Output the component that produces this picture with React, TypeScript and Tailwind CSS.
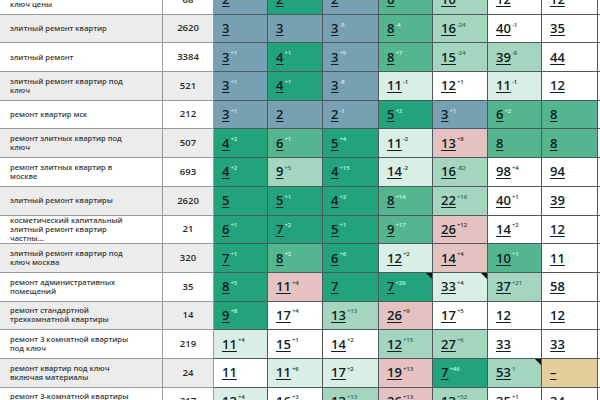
import React from 'react';

type Tone = 'B' | 'G' | 'M' | 'L' | 'V' | 'W' | 'P' | 'T';
type Cell = { v: string; s?: string; tone: Tone; flag?: boolean };

const toneBg: Record<Tone, string> = {
  B: 'bg-[#77a0b3]',
  G: 'bg-[#22a37b]',
  M: 'bg-[#54b68f]',
  L: 'bg-[#a3d5bf]',
  V: 'bg-[#d9eee4]',
  W: 'bg-white',
  P: 'bg-[#e4c2c1]',
  T: 'bg-[#e6cd9c]',
};

const toneSup: Record<Tone, string> = {
  B: 'text-[#d6ecf6]',
  G: 'text-[#c9f3de]',
  M: 'text-[#d6f5e6]',
  L: 'text-[#2f6b55]',
  V: 'text-[#333]',
  W: 'text-[#333]',
  P: 'text-[#333]',
  T: 'text-[#333]',
};

const c = (v: string, tone: Tone, s?: string, flag?: boolean): Cell => ({ v, s, tone, flag });

const rows: { lines: string[]; n: string; cells: Cell[] }[] = [
  {
    lines: ['ремонт квартир под', 'ключ цены'],
    n: '68',
    cells: [c('2', 'B'), c('2', 'G'), c('2', 'B'), c('6', 'M'), c('10', 'L'), c('12', 'W'), c('12', 'W')],
  },
  {
    lines: ['элитный ремонт квартир'],
    n: '2620',
    cells: [c('3', 'B'), c('3', 'B'), c('3', 'B', '-5'), c('8', 'M', '-4'), c('16', 'L', '-24'), c('40', 'W', '-1'), c('35', 'W')],
  },
  {
    lines: ['элитный ремонт'],
    n: '3384',
    cells: [c('3', 'B', '+1'), c('4', 'G', '+1'), c('3', 'B', '+5'), c('8', 'M', '+7'), c('15', 'L', '-24'), c('39', 'L', '-8'), c('44', 'W')],
  },
  {
    lines: ['элитный ремонт квартир под', 'ключ'],
    n: '521',
    cells: [c('3', 'B', '+1'), c('4', 'G', '+1'), c('3', 'B', '-8'), c('11', 'V', '-1'), c('12', 'W', '+1'), c('11', 'V', '-1'), c('12', 'W')],
  },
  {
    lines: ['ремонт квартир мск'],
    n: '212',
    cells: [c('3', 'B', '+1'), c('2', 'B'), c('2', 'B', '-1'), c('5', 'G', '+2'), c('3', 'B', '+1'), c('6', 'M', '+2'), c('8', 'M')],
  },
  {
    lines: ['ремонт элитных квартир под', 'ключ'],
    n: '507',
    cells: [c('4', 'G', '+2'), c('6', 'M', '+1'), c('5', 'G', '+4'), c('11', 'V', '-2'), c('13', 'P', '+8'), c('8', 'M'), c('8', 'M')],
  },
  {
    lines: ['ремонт элитных квартир в', 'москве'],
    n: '693',
    cells: [c('4', 'G', '+2'), c('9', 'L', '+5'), c('4', 'G', '+15'), c('14', 'V', '-2'), c('16', 'L', '-82'), c('98', 'W', '+4'), c('94', 'W')],
  },
  {
    lines: ['элитный ремонт квартиры'],
    n: '2620',
    cells: [c('5', 'G'), c('5', 'G', '+1'), c('4', 'G', '+2'), c('8', 'M', '+14'), c('22', 'L', '+16'), c('40', 'W', '+1'), c('39', 'W')],
  },
  {
    lines: ['косметический капитальный', 'элитный ремонт квартир', 'частны...'],
    n: '21',
    cells: [c('6', 'G', '+1'), c('7', 'G', '+2'), c('5', 'G', '+1'), c('9', 'M', '+17'), c('26', 'P', '+12'), c('14', 'W', '+2'), c('12', 'W')],
  },
  {
    lines: ['элитный ремонт квартир под', 'ключ москва'],
    n: '320',
    cells: [c('7', 'G', '+1'), c('8', 'M', '+2'), c('6', 'G', '+6'), c('12', 'V', '+2'), c('14', 'P', '+4'), c('10', 'M', '+1'), c('11', 'W')],
  },
  {
    lines: ['ремонт административных', 'помещений'],
    n: '35',
    cells: [c('8', 'G', '+5'), c('11', 'P', '+4'), c('7', 'G'), c('7', 'G', '+26', true), c('33', 'V', '+4', true), c('37', 'L', '+21'), c('58', 'W')],
  },
  {
    lines: ['ремонт стандартной', 'трехкомнатной квартиры'],
    n: '14',
    cells: [c('9', 'G', '+8'), c('17', 'W', '+4'), c('13', 'L', '+13'), c('26', 'P', '+9'), c('17', 'W', '+5'), c('12', 'W'), c('12', 'W')],
  },
  {
    lines: ['ремонт 3 комнатной квартиры', 'под ключ'],
    n: '219',
    cells: [c('11', 'V', '+4'), c('15', 'W', '+1'), c('14', 'W', '+2'), c('12', 'L', '+15'), c('27', 'L', '+6'), c('33', 'W'), c('33', 'W')],
  },
  {
    lines: ['ремонт квартир под ключ', 'включая материалы'],
    n: '24',
    cells: [c('11', 'W'), c('11', 'V', '+6'), c('17', 'V', '+2'), c('19', 'P', '+13'), c('7', 'G', '+46'), c('53', 'L', '1', true), c('–', 'T')],
  },
  {
    lines: ['ремонт 3-комнатной квартиры', 'под ключ'],
    n: '217',
    cells: [c('12', 'V', '+4'), c('16', 'W', '+3'), c('13', 'L', '+13'), c('26', 'P', '+13'), c('13', 'L', '+52'), c('35', 'W', '+1'), c('34', 'W')],
  },
];

function DataCell({ cell }: { cell: Cell }) {
  return (
    <div
      className={`relative flex items-center border-r border-b border-[#4d5a5e] pl-[8px] ${toneBg[cell.tone]}`}
    >
      <span className="text-[13px] font-semibold leading-none text-[#0f1d26] underline decoration-1 underline-offset-2">
        {cell.v}
      </span>
      {cell.s && (
        <span className={`ml-[1px] -mt-[8px] text-[6px] font-semibold leading-none ${toneSup[cell.tone]}`}>
          {cell.s}
        </span>
      )}
      {cell.flag && (
        <span className="absolute right-0 top-0 h-0 w-0 border-t-[6px] border-l-[6px] border-t-[#111] border-l-transparent" />
      )}
    </div>
  );
}

export default function App() {
  return (
    <div className="h-[400px] w-[600px] overflow-hidden bg-white font-['Open_Sans','Liberation_Sans',sans-serif]">
      <div className="-mt-[14px] grid grid-cols-[163px_51px_54px_55px_56px_54px_55px_54px_56px_2px] auto-rows-[28.7px]">
        {rows.map((r, i) => {
          const rowBg = i % 2 === 1 ? 'bg-[#ececec]' : 'bg-white';
          return (
            <React.Fragment key={i}>
              <div
                className={`flex flex-col justify-center border-r border-b border-[#9a9a9a] pl-[10px] ${rowBg}`}
              >
                {r.lines.map((l) => (
                  <span key={l} className="text-[7.5px] font-semibold leading-[9px] text-[#3a3a3a]">
                    {l}
                  </span>
                ))}
              </div>
              <div
                className={`flex items-center justify-center border-r border-b border-[#9a9a9a] text-[9.5px] font-semibold text-[#2a2a2a] ${rowBg}`}
              >
                {r.n}
              </div>
              {r.cells.map((cell, j) => (
                <DataCell key={j} cell={cell} />
              ))}
              <div className="border-b border-[#4d5a5e] bg-white" />
            </React.Fragment>
          );
        })}
      </div>
    </div>
  );
}
